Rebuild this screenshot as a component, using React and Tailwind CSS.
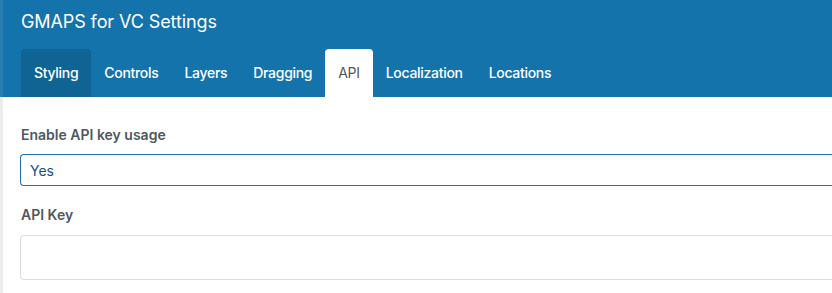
export default function App() {
  const tabs = ["Styling", "Controls", "Layers", "Dragging", "API", "Localization", "Locations"];
  return (
    <div className="w-[832px] h-[293px] overflow-hidden bg-white flex" style={{ fontFamily: "Inter, 'Liberation Sans', sans-serif" }}>
      <div className="w-[3px] shrink-0 flex flex-col">
        <div className="h-[97px] bg-[#2a7db0]" />
        <div className="flex-1 bg-[#ebebeb]" />
      </div>
      <div className="flex-1 min-w-0 flex flex-col">
        <div className="bg-[#1473aa] h-[97px] flex flex-col">
          <div className="h-[49px] pl-[18px] pt-[10px] text-white text-[18px] leading-[24px] tracking-[-0.1px]">GMAPS for VC Settings</div>
          <div className="flex pl-[18px] h-[48px]">
            {tabs.map((t, i) => (
              <div
                key={t}
                className={
                  "px-[13px] pb-[1px] h-full flex items-center text-[14px] tracking-[-0.3px] rounded-t-[4px] " +
                  (t === "API" ? "bg-white text-[#50575e] font-normal" : i === 0 ? "bg-[#106494] text-white font-medium" : "text-white font-medium")
                }
              >
                {t}
              </div>
            ))}
          </div>
        </div>
        <div className="pl-[17px] pt-[28px] flex flex-col">
          <div className="pl-[1px] text-[14px] font-semibold text-[#50575e] leading-[20px]">Enable API key usage</div>
          <div className="mt-[9px] h-[32px] border border-[#2271b1] border-r-0 rounded-l-[4px] flex items-center pl-[9px] text-[14px] text-[#1d4f7c]">Yes</div>
          <div className="mt-[19px] pl-[1px] text-[14px] font-semibold text-[#50575e] leading-[20px]">API Key</div>
          <div className="mt-[10px] h-[45px] border border-[#dcdcde] border-r-0 rounded-l-[4px]" />
        </div>
      </div>
    </div>
  );
}
